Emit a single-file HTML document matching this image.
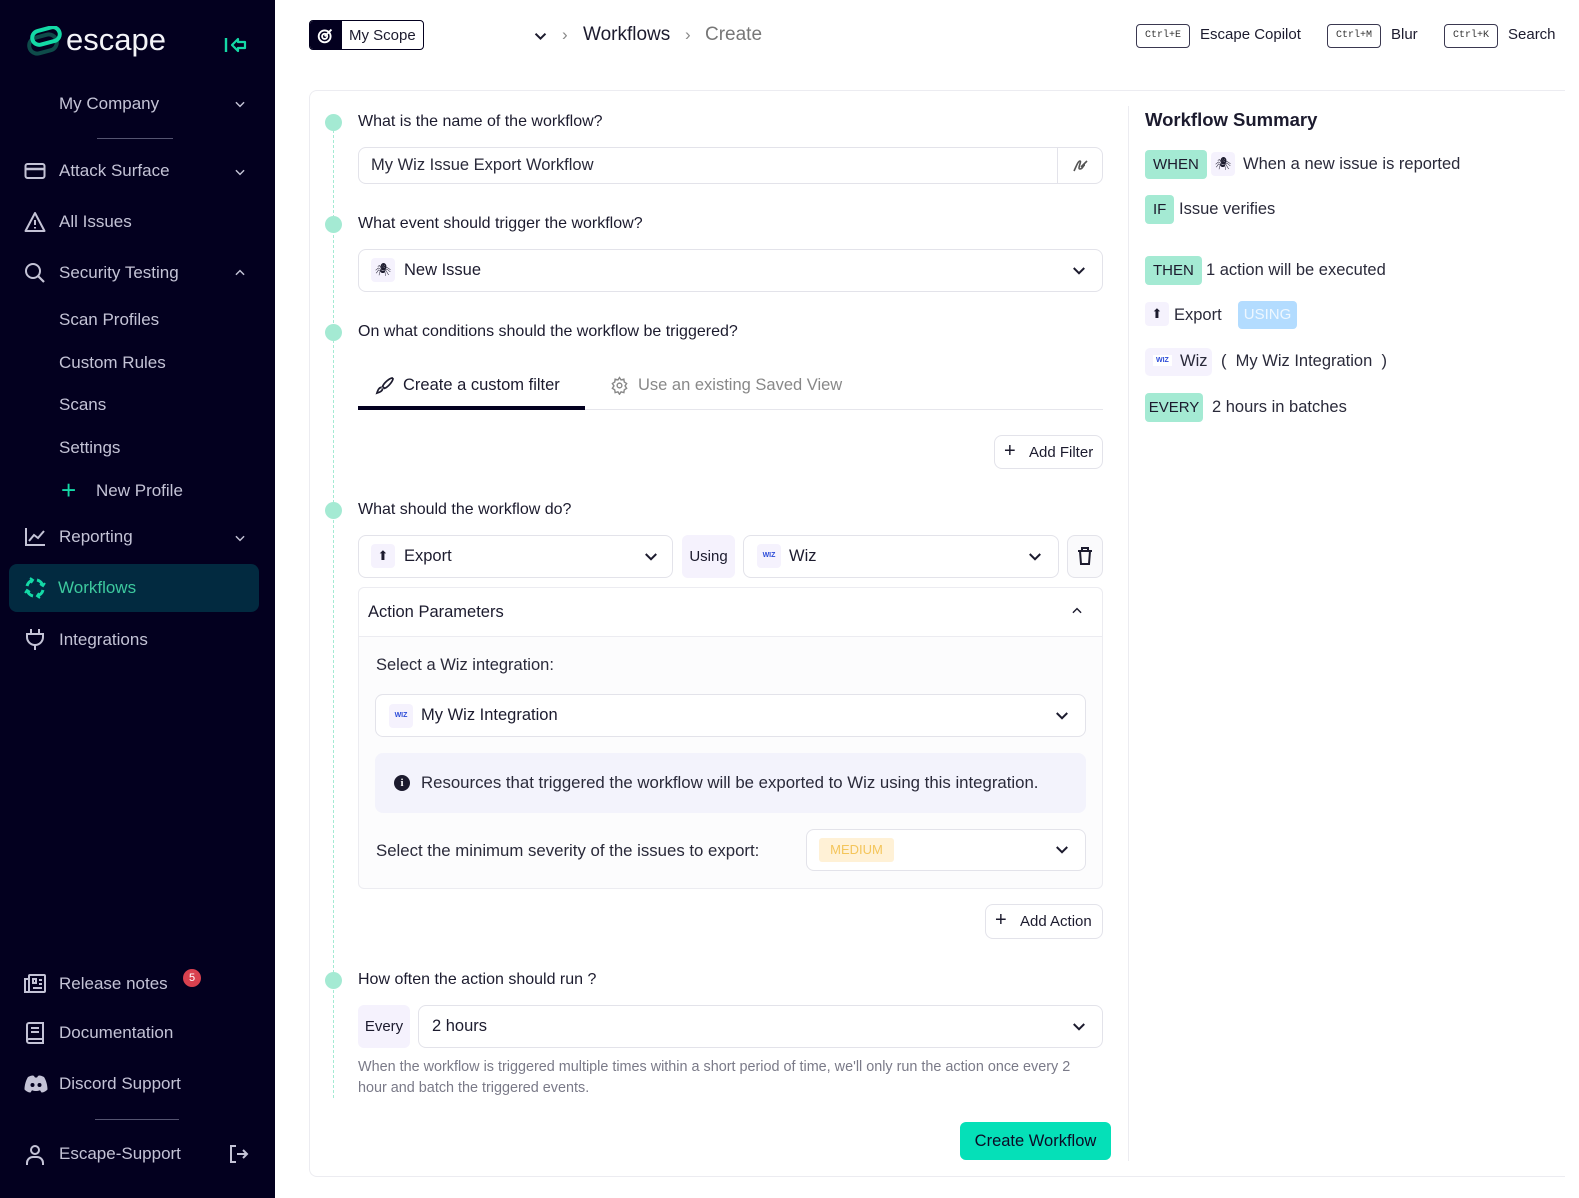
<!DOCTYPE html>
<html><head><meta charset="utf-8">
<style>
*{box-sizing:border-box;margin:0;padding:0}
body{width:1579px;height:1198px;position:relative;font-family:"Liberation Sans",sans-serif;color:#1c1b2e;background:#fff;overflow:hidden}
.a{position:absolute}
#sb{left:0;top:0;width:275px;height:1198px;background:#03001f;color:#c7c6d9}
.si{position:absolute;left:59px;font-size:17px;color:#c4c3d6;white-space:nowrap}
.ic{position:absolute;left:24px}
.chev{position:absolute;left:233px}
.q{position:absolute;left:358px;font-size:16px;color:#1c1b2e}
.dot{position:absolute;left:325px;width:17px;height:17px;border-radius:50%;background:#a4ead3}
.box{position:absolute;border:1px solid #e3e3ea;border-radius:8px;background:#fff}
.tag{position:absolute;background:#a4ead3;border-radius:4px;font-size:15px;color:#1c1b2e;padding:0 8px;height:29px;line-height:29px}
.st{position:absolute;font-size:16.5px;color:#2a2a3a;white-space:nowrap}
.ib{display:inline-block;width:24px;height:24px;background:#f5f2fd;border-radius:4px;text-align:center;vertical-align:middle}
.kbd{position:absolute;top:24px;height:24px;border:1.5px solid #3a3850;border-radius:4px;font-family:"Liberation Mono",monospace;font-size:10px;line-height:21px;padding:0 8px;color:#333}
.k{position:absolute;top:26px;font-size:15px;color:#1c1b2e}
</style></head><body>
<div id="sb" class="a">
 <svg class="a" style="left:26px;top:26px" width="38" height="34" viewBox="0 0 38 34"><rect x="3" y="10" width="28" height="16" rx="8" fill="none" stroke="#0e4b4a" stroke-width="4" transform="rotate(-15 17 18)"/><rect x="6" y="3" width="28" height="14" rx="7" fill="none" stroke="#14d9a6" stroke-width="4" transform="rotate(-15 20 10)"/></svg>
 <div class="a" style="left:66px;top:22px;font-size:31px;color:#f4f4f8">escape</div>
 <svg class="a" style="left:224px;top:36px" width="24" height="18" viewBox="0 0 24 18"><path d="M2 2v14" stroke="#14d9a6" stroke-width="2.4"/><path d="M8 9l6-6v3h7v6h-7v3z" fill="none" stroke="#14d9a6" stroke-width="2.2" stroke-linejoin="round"/></svg>
 <div class="si" style="top:94px">My Company</div>
 <svg class="chev" style="top:97px" width="14" height="14" viewBox="0 0 24 24"><path d="M5 9l7 7 7-7" stroke="#c4c3d6" stroke-width="2.5" fill="none"/></svg>
 <div class="a" style="left:97px;top:138px;width:76px;height:1px;background:#555470"></div>

 <svg class="ic" style="top:161px" width="22" height="20" viewBox="0 0 22 20"><rect x="1.5" y="3" width="19" height="14" rx="2" fill="none" stroke="#c4c3d6" stroke-width="2"/><path d="M1.5 8h19" stroke="#c4c3d6" stroke-width="2.5"/></svg>
 <div class="si" style="top:161px">Attack Surface</div>
 <svg class="chev" style="top:165px" width="14" height="14" viewBox="0 0 24 24"><path d="M5 9l7 7 7-7" stroke="#c4c3d6" stroke-width="2.5" fill="none"/></svg>
 <svg class="ic" style="top:211px" width="22" height="22" viewBox="0 0 22 22"><path d="M11 2L1.5 20h19z" fill="none" stroke="#c4c3d6" stroke-width="2" stroke-linejoin="round"/><path d="M11 9v5M11 16v1.5" stroke="#c4c3d6" stroke-width="2"/></svg>
 <div class="si" style="top:212px">All Issues</div>
 <svg class="ic" style="top:262px" width="22" height="22" viewBox="0 0 22 22"><circle cx="9" cy="9" r="7" fill="none" stroke="#c4c3d6" stroke-width="2"/><path d="M14 14l6 6" stroke="#c4c3d6" stroke-width="2.2"/></svg>
 <div class="si" style="top:263px">Security Testing</div>
 <svg class="chev" style="top:266px" width="14" height="14" viewBox="0 0 24 24"><path d="M5 15l7-7 7 7" stroke="#c4c3d6" stroke-width="2.5" fill="none"/></svg>
 <div class="si" style="top:310px">Scan Profiles</div>
 <div class="si" style="top:353px">Custom Rules</div>
 <div class="si" style="top:395px">Scans</div>
 <div class="si" style="top:438px">Settings</div>
 <div class="a" style="left:61px;top:475px;color:#14d9a6;font-size:26px;line-height:30px">+</div>
 <div class="si" style="top:481px;left:96px">New Profile</div>
 <svg class="ic" style="top:527px" width="22" height="20" viewBox="0 0 22 20"><path d="M2 1v17h19" fill="none" stroke="#c4c3d6" stroke-width="2"/><path d="M5 14l5-6 4 3 6-7" fill="none" stroke="#c4c3d6" stroke-width="2"/></svg>
 <div class="si" style="top:527px">Reporting</div>
 <svg class="chev" style="top:531px" width="14" height="14" viewBox="0 0 24 24"><path d="M5 9l7 7 7-7" stroke="#c4c3d6" stroke-width="2.5" fill="none"/></svg>
 <div class="a" style="left:9px;top:564px;width:250px;height:48px;border-radius:8px;background:#022a40"></div>
 <svg class="ic" style="top:577px" width="22" height="22" viewBox="0 0 22 22" fill="none" stroke="#14d9a6" stroke-width="3"><path d="M3 9a8 8 0 0 1 6-6"/><path d="M13 3a8 8 0 0 1 6 6"/><path d="M19 13a8 8 0 0 1-6 6"/><path d="M9 19a8 8 0 0 1-6-6"/><path d="M6 1l3 2-2 3M21 6l-2 3-3-2M16 21l-3-2 2-3M1 16l2-3 3 2" stroke-width="2"/></svg>
 <div class="si" style="top:578px;left:58px;color:#3dc99e">Workflows</div>
 <svg class="ic" style="top:628px" width="22" height="22" viewBox="0 0 22 22" fill="none" stroke="#c4c3d6" stroke-width="2"><path d="M7 1v5M15 1v5M3 6h16v3a8 8 0 0 1-16 0z"/><path d="M11 17v5"/></svg>
 <div class="si" style="top:630px">Integrations</div>

 <svg class="ic" style="top:974px" width="22" height="20" viewBox="0 0 22 20" fill="none" stroke="#c4c3d6" stroke-width="2"><rect x="5" y="1" width="16" height="17" rx="1"/><path d="M5 5H1v13h4M9 5h3v4H9zM15 6h3M15 10h3M9 14h9"/></svg>
 <div class="si" style="top:974px">Release notes</div>
 <div class="a" style="left:183px;top:969px;width:18px;height:18px;border-radius:50%;background:#d9414f;color:#fff;font-size:11px;text-align:center;line-height:18px">5</div>
 <svg class="ic" style="top:1022px" width="22" height="22" viewBox="0 0 22 22" fill="none" stroke="#c4c3d6" stroke-width="2"><path d="M3 3a2 2 0 0 1 2-2h14v16H5a2 2 0 0 0-2 2zM3 19a2 2 0 0 0 2 2h14v-4"/><path d="M7 6h8M7 10h8"/></svg>
 <div class="si" style="top:1023px">Documentation</div>
 <svg class="ic" style="top:1075px" width="24" height="18" viewBox="0 0 24 18"><path d="M4 2c3-1.5 5-2 6-1l1 1.5h2L14 1c1-1 3-.5 6 1 2 3 3.5 8 3.5 12.5-2 2-4 3-6 3l-1.5-2.2c-3 1-5 1-8 0L6.5 17.5c-2 0-4-1-6-3C.5 10 2 5 4 2z" fill="#c4c3d6"/><circle cx="8.5" cy="10" r="2" fill="#03001f"/><circle cx="15.5" cy="10" r="2" fill="#03001f"/></svg>
 <div class="si" style="top:1074px">Discord Support</div>
 <div class="a" style="left:95px;top:1119px;width:84px;height:1px;background:#555470"></div>
 <svg class="ic" style="top:1144px" width="22" height="22" viewBox="0 0 22 22" fill="none" stroke="#c4c3d6" stroke-width="2"><circle cx="11" cy="6" r="4"/><path d="M3 21v-2a6 6 0 0 1 6-6h4a6 6 0 0 1 6 6v2"/></svg>
 <div class="si" style="top:1144px">Escape-Support</div>
 <svg class="a" style="left:229px;top:1145px" width="20" height="18" viewBox="0 0 20 18" fill="none" stroke="#c4c3d6" stroke-width="2"><path d="M7 1H2v16h5M8 9h10M14 5l4 4-4 4"/></svg>
</div>

<div class="a" style="left:309px;top:20px;width:115px;height:30px;border:1.5px solid #03001f;border-radius:4px;overflow:hidden">
 <div class="a" style="left:0;top:0;width:32px;height:28px;background:#03001f"></div>
 <svg class="a" style="left:7px;top:6px" width="17" height="17" viewBox="0 0 20 20" fill="none" stroke="#fff" stroke-width="2.2"><circle cx="9" cy="11" r="7"/><circle cx="9" cy="11" r="3"/><path d="M9 11l8-8"/></svg>
 <div class="a" style="left:39px;top:6px;font-size:15px">My Scope</div>
</div>
<svg class="a" style="left:532px;top:28px" width="17" height="17" viewBox="0 0 24 24"><path d="M5 8l7 7 7-7" stroke="#1c1b2e" stroke-width="2.8" fill="none"/></svg>
<div class="a" style="left:562px;top:25px;font-size:17px;color:#888">›</div>
<div class="a" style="left:583px;top:24px;font-size:19px;color:#1c1b2e">Workflows</div>
<div class="a" style="left:685px;top:25px;font-size:17px;color:#888">›</div>
<div class="a" style="left:705px;top:24px;font-size:19px;color:#777">Create</div>
<div class="kbd" style="left:1136px">Ctrl+E</div><div class="k" style="left:1200px">Escape Copilot</div>
<div class="kbd" style="left:1327px">Ctrl+M</div><div class="k" style="left:1391px">Blur</div>
<div class="kbd" style="left:1444px">Ctrl+K</div><div class="k" style="left:1508px">Search</div>

<div class="a" style="left:309px;top:90px;width:1256px;height:1087px;border:1px solid #ececf1;border-right:none;border-radius:8px 0 0 8px"></div>
<div class="a" style="left:1128px;top:106px;width:1px;height:1055px;background:#ececf1"></div>
<div class="a" style="left:333px;top:130px;width:0;height:968px;border-left:1.5px dashed #a4ead3"></div>

<div class="dot" style="top:114px"></div><div class="q" style="top:113px">What is the name of the workflow?</div>
<div class="box" style="left:358px;top:147px;width:745px;height:37px"></div>
<div class="a" style="left:1057px;top:148px;width:1px;height:35px;background:#e3e3ea"></div>
<div class="a" style="left:371px;top:156px;font-size:16.5px;color:#2a2a3a">My Wiz Issue Export Workflow</div>
<svg class="a" style="left:1072px;top:157px" width="17" height="16" viewBox="0 0 17 16" fill="none" stroke="#555" stroke-width="1.6"><path d="M2 14c2-4 4-10 6-10s-3 8 0 8 3-4 5-4M9 10l6-6"/></svg>

<div class="dot" style="top:216px"></div><div class="q" style="top:215px">What event should trigger the workflow?</div>
<div class="box" style="left:358px;top:249px;width:745px;height:43px"></div>
<div class="a" style="left:371px;top:258px"><span class="ib" style="font-size:13px;line-height:24px">🕷</span></div>
<div class="a" style="left:404px;top:261px;font-size:16.5px">New Issue</div>
<svg class="a" style="left:1070px;top:262px" width="18" height="18" viewBox="0 0 24 24"><path d="M5 8l7 7 7-7" stroke="#1c1b2e" stroke-width="2.6" fill="none"/></svg>

<div class="dot" style="top:324px"></div><div class="q" style="top:323px">On what conditions should the workflow be triggered?</div>
<svg class="a" style="left:375px;top:376px" width="19" height="19" viewBox="0 0 20 20" fill="none" stroke="#1c1b2e" stroke-width="1.8"><path d="M18 2C14 3 9 8 8 11l2 2c3-1 8-6 9-10zM7 12c-3 0-4 3-5 6 3-1 6-2 6-5"/></svg>
<div class="a" style="left:403px;top:376px;font-size:16.5px">Create a custom filter</div>
<svg class="a" style="left:610px;top:376px" width="19" height="19" viewBox="0 0 24 24" fill="none" stroke="#888" stroke-width="1.8"><circle cx="12" cy="12" r="3"/><path d="M12 2l2 3 3.5-1 .5 3.5 3 2-2 3 2 3-3 2-.5 3.5-3.5-1-2 3-2-3-3.5 1-.5-3.5-3-2 2-3-2-3 3-2 .5-3.5 3.5 1z"/></svg>
<div class="a" style="left:638px;top:376px;font-size:16.5px;color:#888">Use an existing Saved View</div>
<div class="a" style="left:358px;top:409px;width:745px;height:1px;background:#e6e6ec"></div>
<div class="a" style="left:358px;top:406px;width:227px;height:4px;background:#03001f"></div>
<div class="box" style="left:994px;top:435px;width:109px;height:34px"></div>
<div class="a" style="left:1004px;top:440px;font-size:20px;line-height:22px">+</div>
<div class="a" style="left:1029px;top:444px;font-size:15px">Add Filter</div>

<div class="dot" style="top:502px"></div><div class="q" style="top:501px">What should the workflow do?</div>
<div class="box" style="left:358px;top:535px;width:315px;height:43px"></div>
<div class="a" style="left:371px;top:544px"><span class="ib" style="font-size:13px;line-height:24px">⬆</span></div>
<div class="a" style="left:404px;top:547px;font-size:16.5px">Export</div>
<svg class="a" style="left:642px;top:548px" width="18" height="18" viewBox="0 0 24 24"><path d="M5 8l7 7 7-7" stroke="#1c1b2e" stroke-width="2.6" fill="none"/></svg>
<div class="a" style="left:682px;top:535px;width:53px;height:43px;background:#f5f2fd;border-radius:6px;font-size:15px;line-height:43px;text-align:center">Using</div>
<div class="box" style="left:743px;top:535px;width:316px;height:43px"></div>
<div class="a" style="left:757px;top:544px"><span class="ib" style="font-size:7px;line-height:24px;color:#2b4bd8;font-weight:bold">WIZ</span></div>
<div class="a" style="left:789px;top:547px;font-size:16.5px">Wiz</div>
<svg class="a" style="left:1026px;top:548px" width="18" height="18" viewBox="0 0 24 24"><path d="M5 8l7 7 7-7" stroke="#1c1b2e" stroke-width="2.6" fill="none"/></svg>
<div class="box" style="left:1067px;top:535px;width:36px;height:43px;background:#fafafc"></div>
<svg class="a" style="left:1077px;top:547px" width="16" height="18" viewBox="0 0 16 18" fill="none" stroke="#1c1b2e" stroke-width="2"><path d="M1 4h14M5 4V1h6v3M3 4l1 13h8l1-13"/></svg>

<div class="a" style="left:358px;top:587px;width:745px;height:302px;border:1px solid #ececf1;border-radius:6px;background:#fcfcfd"></div>
<div class="a" style="left:359px;top:588px;width:743px;height:49px;background:#fff;border-bottom:1px solid #ececf1;border-radius:6px 6px 0 0"></div>
<div class="a" style="left:368px;top:603px;font-size:16.5px">Action Parameters</div>
<svg class="a" style="left:1070px;top:604px" width="14" height="14" viewBox="0 0 24 24"><path d="M5 15l7-7 7 7" stroke="#1c1b2e" stroke-width="2.4" fill="none"/></svg>
<div class="a" style="left:376px;top:656px;font-size:16.5px;color:#2a2a3a">Select a Wiz integration:</div>
<div class="box" style="left:375px;top:694px;width:711px;height:43px"></div>
<div class="a" style="left:389px;top:704px"><span class="ib" style="font-size:7px;line-height:24px;color:#2b4bd8;font-weight:bold">WIZ</span></div>
<div class="a" style="left:421px;top:706px;font-size:16.5px">My Wiz Integration</div>
<svg class="a" style="left:1053px;top:707px" width="18" height="18" viewBox="0 0 24 24"><path d="M5 8l7 7 7-7" stroke="#1c1b2e" stroke-width="2.6" fill="none"/></svg>
<div class="a" style="left:375px;top:753px;width:711px;height:60px;background:#f3f3fc;border-radius:8px"></div>
<div class="a" style="left:394px;top:775px;width:16px;height:16px;border-radius:50%;background:#1c1b2e;color:#fff;font-size:11px;font-weight:bold;text-align:center;line-height:16px;font-family:'Liberation Serif',serif">i</div>
<div class="a" style="left:421px;top:773px;font-size:16.8px;color:#2a2a3a">Resources that triggered the workflow will be exported to Wiz using this integration.</div>
<div class="a" style="left:376px;top:841px;font-size:16.8px;color:#2a2a3a">Select the minimum severity of the issues to export:</div>
<div class="box" style="left:806px;top:829px;width:280px;height:42px"></div>
<div class="a" style="left:819px;top:838px;width:75px;height:24px;background:#fff1d6;border-radius:3px;color:#f4c55a;font-size:13px;line-height:24px;text-align:center">MEDIUM</div>
<svg class="a" style="left:1053px;top:841px" width="18" height="18" viewBox="0 0 24 24"><path d="M5 8l7 7 7-7" stroke="#1c1b2e" stroke-width="2.6" fill="none"/></svg>

<div class="box" style="left:985px;top:904px;width:118px;height:35px"></div>
<div class="a" style="left:995px;top:909px;font-size:20px;line-height:22px">+</div>
<div class="a" style="left:1020px;top:913px;font-size:15px">Add Action</div>

<div class="dot" style="top:972px"></div><div class="q" style="top:971px">How often the action should run ?</div>
<div class="a" style="left:358px;top:1005px;width:52px;height:43px;background:#f5f2fd;border-radius:6px;font-size:15px;line-height:43px;text-align:center">Every</div>
<div class="box" style="left:418px;top:1005px;width:685px;height:43px"></div>
<div class="a" style="left:432px;top:1017px;font-size:16.5px">2 hours</div>
<svg class="a" style="left:1070px;top:1018px" width="18" height="18" viewBox="0 0 24 24"><path d="M5 8l7 7 7-7" stroke="#1c1b2e" stroke-width="2.6" fill="none"/></svg>
<div class="a" style="left:358px;top:1057px;width:742px;font-size:14.4px;line-height:21px;color:#7a7a88">When the workflow is triggered multiple times within a short period of time, we'll only run the action once every 2 hour and batch the triggered events.</div>
<div class="a" style="left:960px;top:1122px;width:151px;height:38px;background:#05e0b8;border-radius:6px;font-size:16.5px;line-height:38px;text-align:center;color:#0c0b26">Create Workflow</div>

<div class="a" style="left:1145px;top:109px;font-size:18.5px;font-weight:bold;color:#1c1b2e">Workflow Summary</div>
<div class="tag" style="left:1145px;top:150px">WHEN</div>
<div class="a" style="left:1211px;top:152px"><span class="ib" style="font-size:13px;line-height:24px">🕷</span></div>
<div class="st" style="left:1243px;top:155px">When a new issue is reported</div>
<div class="tag" style="left:1145px;top:195px">IF</div>
<div class="st" style="left:1179px;top:200px">Issue verifies</div>
<div class="tag" style="left:1145px;top:256px">THEN</div>
<div class="st" style="left:1206px;top:261px">1 action will be executed</div>
<div class="a" style="left:1145px;top:302px"><span class="ib" style="font-size:13px;line-height:24px">⬆</span></div>
<div class="st" style="left:1174px;top:306px">Export</div>
<div class="a" style="left:1238px;top:301px;width:59px;height:28px;background:#b3dcff;border-radius:4px;color:#eef7ff;font-size:15px;line-height:28px;text-align:center">USING</div>
<div class="a" style="left:1145px;top:348px;width:67px;height:28px;background:#f5f2fd;border-radius:5px"></div>
<div class="a" style="left:1153px;top:355px;font-size:7px;color:#2b4bd8;font-weight:bold;background:#fff;padding:2px 3px">WIZ</div>
<div class="st" style="left:1180px;top:352px">Wiz</div>
<div class="st" style="left:1221px;top:352px">(&nbsp; My Wiz Integration &nbsp;)</div>
<div class="tag" style="left:1145px;top:393px;width:58px;padding:0;text-align:center">EVERY</div>
<div class="st" style="left:1212px;top:398px">2 hours in batches</div>
</body></html>
